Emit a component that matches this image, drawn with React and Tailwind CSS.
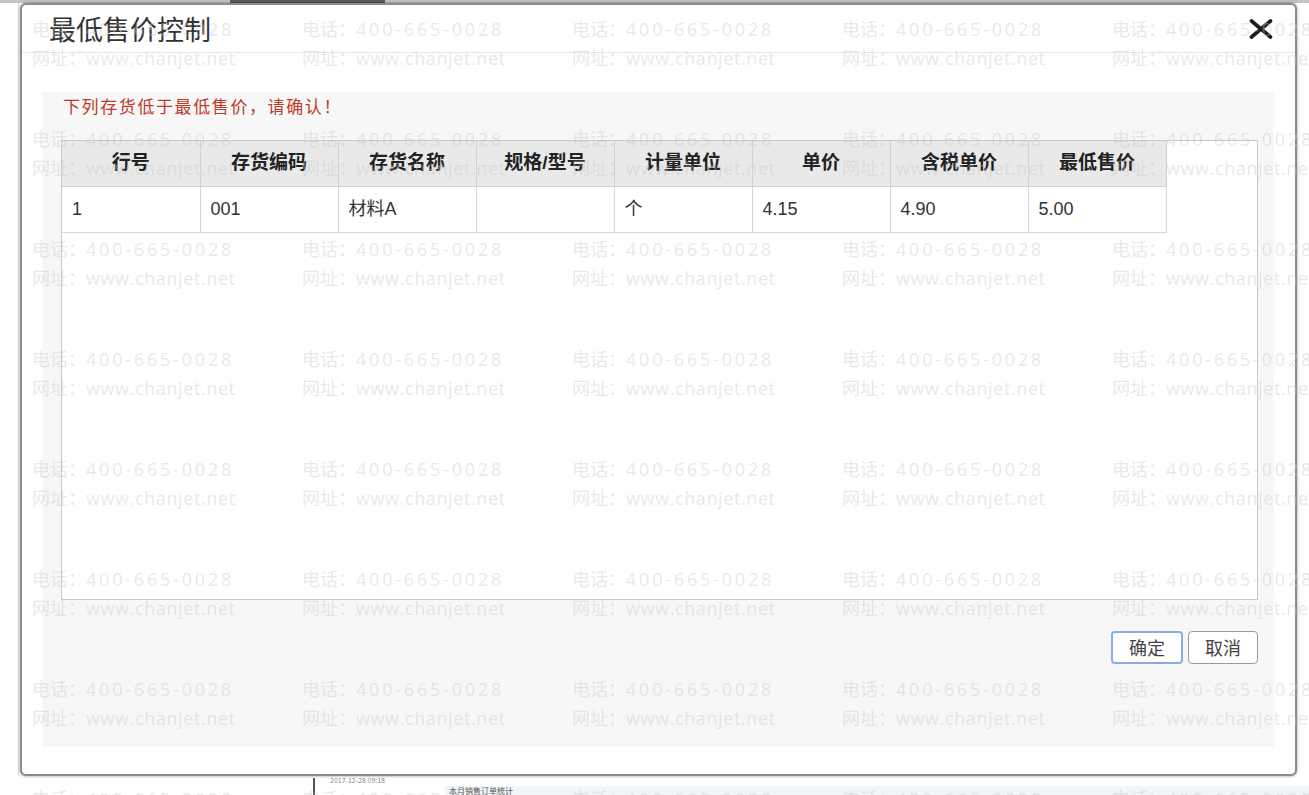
import React from "react";

const columns = ["行号", "存货编码", "存货名称", "规格/型号", "计量单位", "单价", "含税单价", "最低售价"];
const rows = [["1", "001", "材料A", "", "个", "4.15", "4.90", "5.00"]];

const wmRows = Array.from({ length: 8 });
const wmCols = Array.from({ length: 5 });

function Watermark() {
  return (
    <div className="pointer-events-none absolute inset-0 z-10 overflow-hidden pt-[15px] pl-[32px] text-[18px] text-[rgba(200,200,200,0.42)] [font-family:'Open_Sans','Noto_Sans_CJK_SC',sans-serif]">
      {wmRows.map((_, r) => (
        <div key={r} className="flex h-[110px]">
          {wmCols.map((_, c) => (
            <div key={c} className="w-[270px] shrink-0 whitespace-nowrap leading-[29px]">
              <div>
                电话：<span className="tracking-[2.8px]">400-665-0028</span>
              </div>
              <div>
                网址：<span className="tracking-[0.6px]">www.chanjet.net</span>
              </div>
            </div>
          ))}
        </div>
      ))}
    </div>
  );
}

function CloseIcon() {
  return (
    <svg width="24" height="20" viewBox="0 0 24 20" className="block">
      <path d="M2.5 2 L21.5 18 M21.5 2 L2.5 18" stroke="#1c1c1c" strokeWidth="3.6" strokeLinecap="round" />
    </svg>
  );
}

function PriceTable() {
  return (
    <div className="h-[460px] w-[1197px] border border-[#c9c9c9] bg-white">
      <table className="w-[1104px] table-fixed border-collapse [font-family:'Liberation_Sans','Noto_Sans_CJK_SC',sans-serif]">
        <colgroup>
          {columns.map((c) => (
            <col key={c} className="w-[138px]" />
          ))}
        </colgroup>
        <thead>
          <tr>
            {columns.map((c) => (
              <th
                key={c}
                className="h-[45px] border-r border-b border-[#d2d2d2] bg-[#e9e9e9] text-center text-[19px] font-bold text-[#222]"
              >
                {c}
              </th>
            ))}
          </tr>
        </thead>
        <tbody>
          {rows.map((r, i) => (
            <tr key={i}>
              {r.map((v, j) => (
                <td
                  key={j}
                  className="h-[46px] border-r border-b border-[#d6d6d6] pl-[10px] text-left text-[18px] text-[#333]"
                >
                  {v}
                </td>
              ))}
            </tr>
          ))}
        </tbody>
      </table>
    </div>
  );
}

export default function App() {
  return (
    <div className="relative h-[795px] w-[1309px] overflow-hidden bg-white [font-family:'Noto_Sans_CJK_SC',sans-serif]">
      {/* strip of the page behind the dialog */}
      <div className="flex h-[3px] bg-[#c4c4c4]">
        <div className="ml-[230px] h-full w-[155px] bg-[#5a5a5a]" />
      </div>

      <div className="flex h-[773px]">
        <div className="w-[19px] shrink-0 border-r border-[#dcdcdc]" />
        {/* dialog */}
        <div className="ml-[1px] flex h-[773px] w-[1277px] flex-col rounded-[6px] border-2 border-[#8c8c8c] bg-white shadow-[0_0_3px_rgba(0,0,0,0.45)]">
          <div className="flex h-[48px] shrink-0 items-center justify-between border-b border-[#e6e6e6] pl-[27px] pr-[22px]">
            <span className="text-[27px] leading-[30px] text-[#333]">最低售价控制</span>
            <CloseIcon />
          </div>

          <div className="ml-[20px] mt-[39px] flex h-[655px] w-[1232px] flex-col bg-[#f7f7f7] pl-[19px] pt-[4px]">
            <div className="pl-[2px] text-[17px] leading-[20px] tracking-[1.6px] text-[#c0392b]">下列存货低于最低售价，请确认！</div>
            <div className="mt-[24px]">
              <PriceTable />
            </div>
            <div className="mt-[31px] flex w-[1197px] justify-end gap-[5px]">
              <button className="h-[33px] w-[72px] rounded-[4px] border-2 border-[#86aee4] bg-white text-[18px] text-[#444]">
                确定
              </button>
              <button className="h-[33px] w-[70px] rounded-[4px] border border-[#9a9a9a] bg-white text-[18px] text-[#444]">
                取消
              </button>
            </div>
          </div>
        </div>
      </div>

      {/* bottom of the page behind the dialog */}
      <div className="flex h-[19px]">
        <div className="ml-[313px] mt-[2px] h-[17px] w-[2px] bg-[#555]" />
        <div className="ml-[15px] text-[7px] leading-[8px] text-[#888]">2017-12-28 09:18</div>
        <div className="ml-[60px] mt-[10px] flex h-[9px] flex-1 items-end bg-[#f1f4f8] pl-[4px] text-[8px] leading-[8px] text-[#555]">
          本月销售订单统计
        </div>
      </div>

      <Watermark />
    </div>
  );
}
